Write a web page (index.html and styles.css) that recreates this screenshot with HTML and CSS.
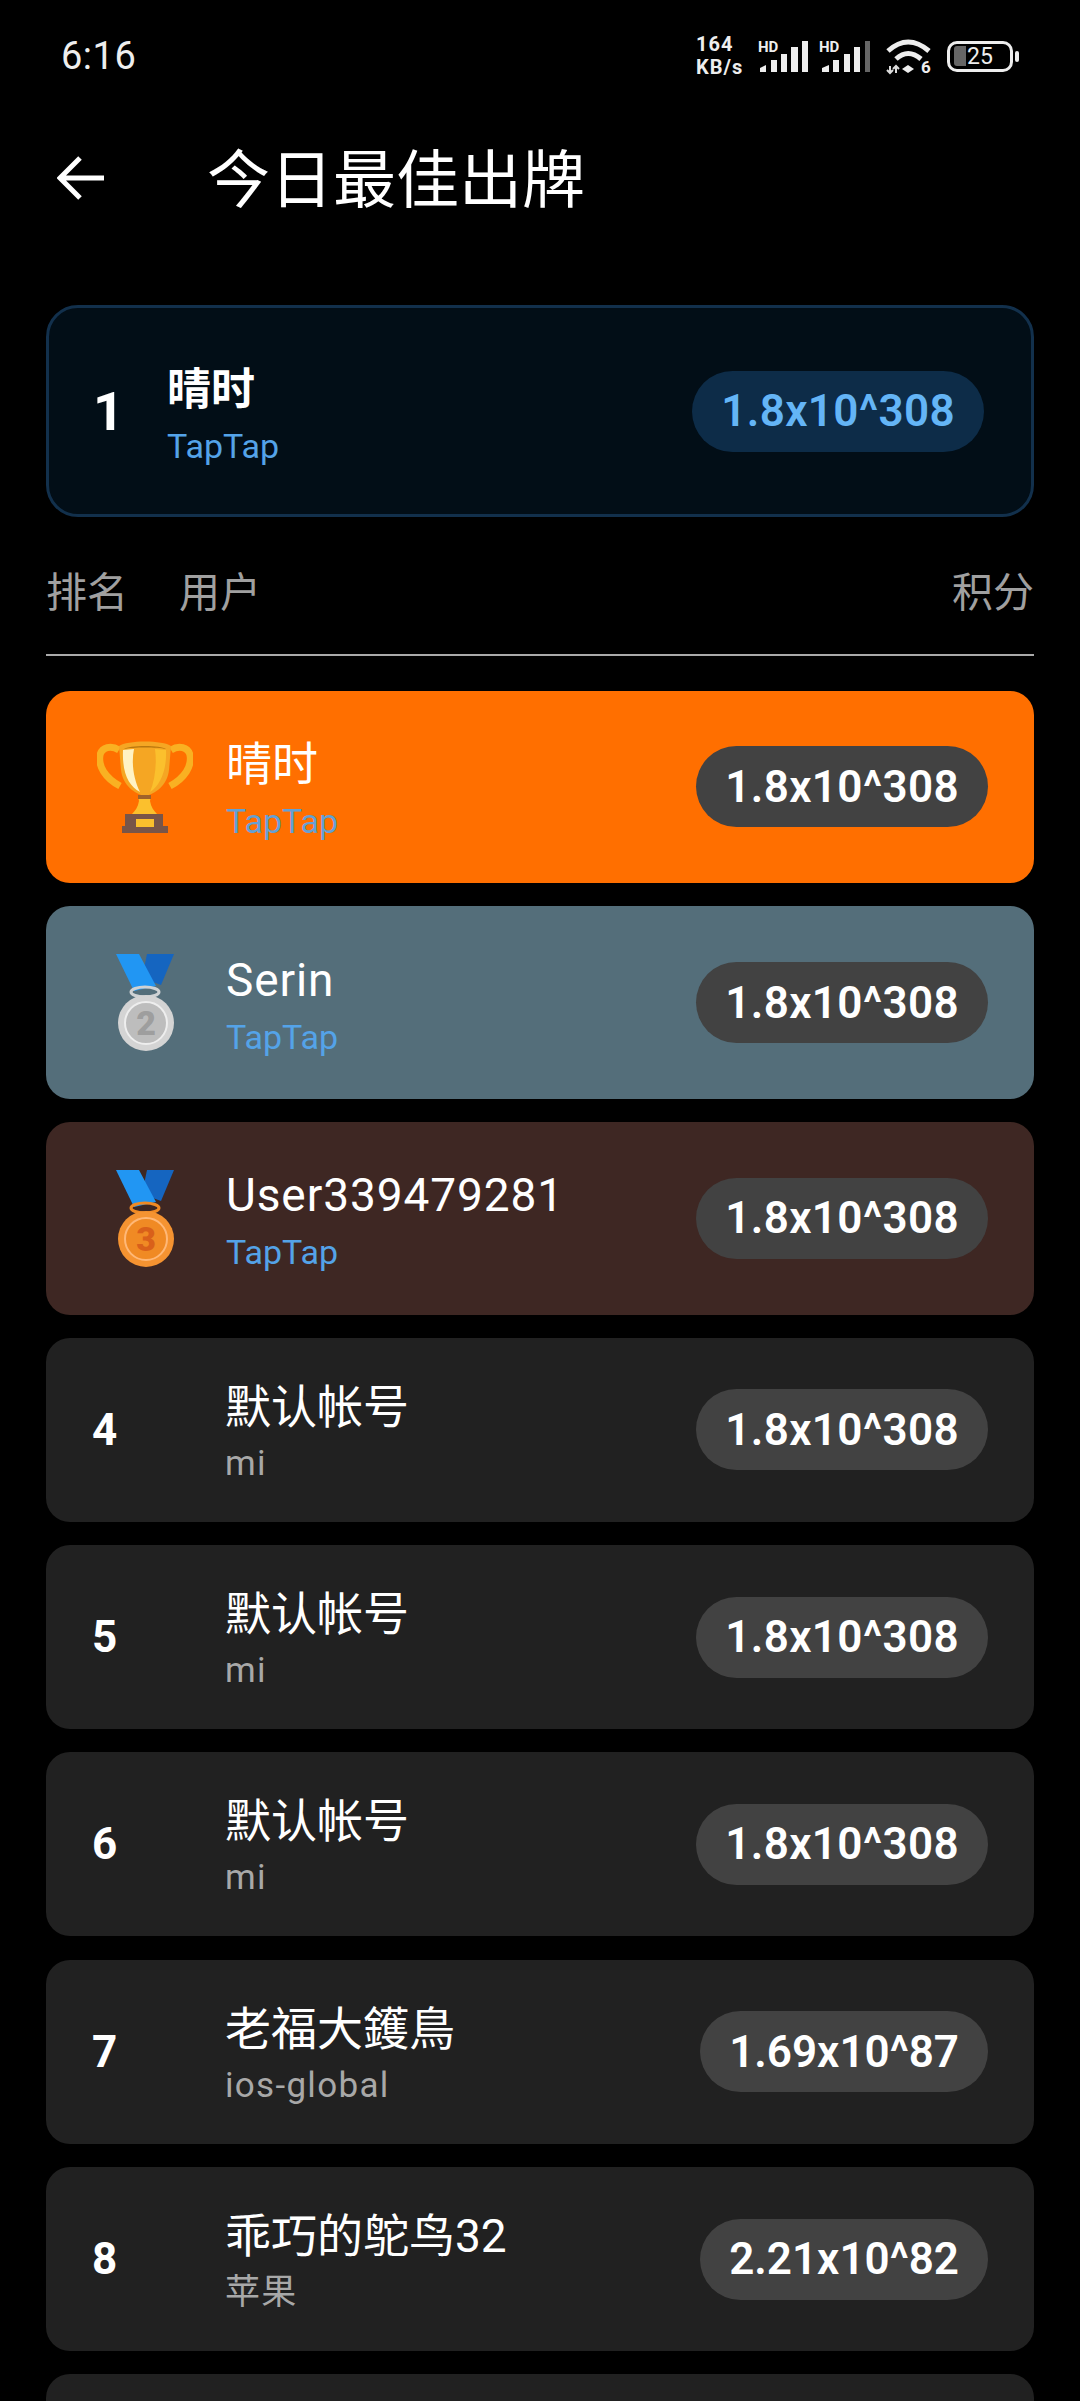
FILE: index.html
```html
<!DOCTYPE html>
<html lang="en">
<head>
    <meta charset="UTF-8">
    <meta name="viewport" content="width=device-width, initial-scale=1.0">
    <title>今日最佳出牌</title>
    <link rel="stylesheet" href="styles.css">
</head>
<body>
    <svg class="defs" width="0" height="0">
        <defs>
            <g id="ribbon">
                <polygon points="31,0 58,0 45,31 26,24" fill="#1565c0"/>
                <polygon points="0,0 23,0 40,32 18,37" fill="#2196f3"/>
            </g>
        </defs>
    </svg>

    <!-- Status bar -->
    <div class="status-bar">
        <span class="clock">6:16</span>
        <div class="status-icons">
            <div class="net-speed"><span>164</span><span>KB/s</span></div>
            <svg class="signal" width="52" height="34" viewBox="0 0 52 34">
                <text x="0" y="13" class="hd">HD</text>
                <path d="M2 29l6-3v7H2zM13 21h6v12h-6zM23 15h6v18h-6zM33 8h7v25h-7zM44 2h6v31h-6z" fill="#eee"/>
            </svg>
            <svg class="signal" width="52" height="34" viewBox="0 0 52 34">
                <text x="0" y="13" class="hd">HD</text>
                <path d="M3 29l7-3v7H3zM14 21h6v12h-6zM25 15h6v18h-6zM35 8h6v25h-6z" fill="#eee"/>
                <path d="M46 2h5v31h-5z" fill="#666"/>
            </svg>
            <svg class="wifi" width="48" height="40" viewBox="0 0 48 40">
                <path d="M3 12Q23 -6 44 12" fill="none" stroke="#eee" stroke-width="5"/>
                <path d="M11 20Q23 9 36 20" fill="none" stroke="#eee" stroke-width="5"/>
                <path d="M23 26l-6 4 6 4 6-4z" fill="#eee"/>
                <path d="M5 27v7M2 31l3 3 3-3M11 34v-7M8 30l3-3 3 3" fill="none" stroke="#ddd" stroke-width="2"/>
                <text x="36" y="34" class="wifi-six">6</text>
            </svg>
            <div class="battery">
                <span class="battery-fill"></span>
                <span class="battery-num">25</span>
            </div>
            <span class="battery-nub"></span>
        </div>
    </div>

    <!-- App bar -->
    <div class="app-bar">
        <svg class="back" width="48" height="44" viewBox="0 0 48 44">
            <path d="M47 22H5M23 2L3 22l20 20" fill="none" stroke="#fff" stroke-width="5"/>
        </svg>
        <h1>今日最佳出牌</h1>
    </div>

    <!-- My rank -->
    <div class="my-card">
        <span class="my-rank">1</span>
        <div class="my-user">
            <div class="my-name">晴时</div>
            <div class="sub blue">TapTap</div>
        </div>
        <span class="pill max my-pill">1.8x10^308</span>
    </div>

    <div class="table-head">
        <span class="head-rank">排名</span>
        <span class="head-user">用户</span>
        <span>积分</span>
    </div>

    <div class="rank-list">
        <div class="row tall gold">
            <div class="rank">
                <svg width="96" height="94" viewBox="0 0 96 94">
                    <path d="M23 46C8 38 1 26 3 15 5 7 14 5 22 10M73 46C88 38 95 26 93 15 91 7 82 5 74 10" fill="none" stroke="#f9b122" stroke-width="7"/>
                    <path d="M22 6C30 0 66 0 74 6L72 30C70 46 58 54 48 56 38 54 26 46 24 30z" fill="#f5a623"/>
                    <path d="M27 9C32 5 64 5 69 9 60 7 36 7 27 9z" fill="#b9770e"/>
                    <path d="M26 10L37 9C34 24 37 40 43 52 32 46 25 34 26 10z" fill="#fff3c4"/>
                    <path d="M58 9L69 10C70 30 63 46 53 52 58 40 60 24 58 9z" fill="#fbc02d"/>
                    <path d="M41 56h13l-1 5c1 6 4 10 7 13H35c3-3 6-7 7-13z" fill="#fbc02d"/>
                    <path d="M41 55h13v4H41z" fill="#a0622a"/>
                    <path d="M28 74h38v12h5v7H25v-7h3z" fill="#795548"/>
                    <path d="M39 79h18v8H39z" fill="#fbc02d"/>
                </svg>
            </div>
            <div class="user">
                <div class="name">晴时</div>
                <div class="sub blue">TapTap</div>
            </div>
            <span class="pill max">1.8x10^308</span>
        </div>

        <div class="row tall silver">
            <div class="rank">
                <svg width="58" height="97" viewBox="0 0 58 97">
                    <use href="#ribbon"/>
                    <ellipse cx="29" cy="38" rx="14" ry="5" fill="none" stroke="#cfd2d4" stroke-width="3"/>
                    <circle cx="30" cy="69" r="28" fill="#d4d4d4"/>
                    <circle cx="30" cy="69" r="21" fill="#bdbdbd" stroke="#eeeeee" stroke-width="2"/>
                    <text x="30" y="81" class="medal-num silver-num">2</text>
                </svg>
            </div>
            <div class="user">
                <div class="name latin">Serin</div>
                <div class="sub blue">TapTap</div>
            </div>
            <span class="pill max">1.8x10^308</span>
        </div>

        <div class="row tall bronze">
            <div class="rank">
                <svg width="58" height="97" viewBox="0 0 58 97">
                    <use href="#ribbon"/>
                    <ellipse cx="29" cy="38" rx="14" ry="5" fill="none" stroke="#f08a24" stroke-width="3"/>
                    <circle cx="30" cy="69" r="28" fill="#f59331"/>
                    <circle cx="30" cy="69" r="21" fill="#f08a24" stroke="#ffb877" stroke-width="2"/>
                    <text x="30" y="81" class="medal-num bronze-num">3</text>
                </svg>
            </div>
            <div class="user">
                <div class="name latin">User339479281</div>
                <div class="sub blue">TapTap</div>
            </div>
            <span class="pill max">1.8x10^308</span>
        </div>

        <div class="row">
            <div class="rank">4</div>
            <div class="user">
                <div class="name">默认帐号</div>
                <div class="sub">mi</div>
            </div>
            <span class="pill max">1.8x10^308</span>
        </div>

        <div class="row">
            <div class="rank">5</div>
            <div class="user">
                <div class="name">默认帐号</div>
                <div class="sub">mi</div>
            </div>
            <span class="pill max">1.8x10^308</span>
        </div>

        <div class="row">
            <div class="rank">6</div>
            <div class="user">
                <div class="name">默认帐号</div>
                <div class="sub">mi</div>
            </div>
            <span class="pill max">1.8x10^308</span>
        </div>

        <div class="row">
            <div class="rank">7</div>
            <div class="user">
                <div class="name">老福大鑊鳥</div>
                <div class="sub">ios-global</div>
            </div>
            <span class="pill">1.69x10^87</span>
        </div>

        <div class="row">
            <div class="rank">8</div>
            <div class="user">
                <div class="name">乖巧的鸵鸟32</div>
                <div class="sub">苹果</div>
            </div>
            <span class="pill">2.21x10^82</span>
        </div>

        <div class="row"></div>
    </div>
</body>
</html>
```

FILE: styles.css
```css
html, body {
    margin: 0;
    padding: 0;
    background: #000;
}

body {
    height: 2401px;
    overflow: hidden;
    color: #fff;
    font-family: 'Roboto', 'Noto Sans CJK SC', sans-serif;
}

.defs {
    position: absolute;
}

.status-bar {
    height: 112px;
    padding: 0 61px 0 61px;
    display: flex;
    justify-content: space-between;
    align-items: center;
}

.clock {
    font-size: 38px;
    font-weight: 400;
    letter-spacing: 0.5px;
    color: #eee;
}

.status-icons {
    display: flex;
    align-items: center;
}

.net-speed {
    min-width: 53px;
    display: flex;
    flex-direction: column;
    margin-right: 9px;
    font-size: 20px;
    font-weight: 700;
    letter-spacing: 1px;
    line-height: 23px;
    color: #eee;
}

.signal {
    margin-right: 9px;
}

.signal + .wifi {
    margin-left: 5px;
}

.hd {
    font-family: 'Roboto', sans-serif;
    font-size: 15px;
    font-weight: 700;
    fill: #eee;
}

.wifi {
    margin: 6px 14px 0 0;
}

.wifi-six {
    font-family: 'Roboto', sans-serif;
    font-size: 17px;
    font-weight: 700;
    fill: #eee;
}

.battery {
    width: 66px;
    height: 31px;
    box-sizing: border-box;
    border: 3px solid #eee;
    border-radius: 10px;
    display: flex;
    align-items: center;
    padding-left: 4px;
}

.battery-fill {
    width: 12px;
    height: 20px;
    background: #666;
    border-radius: 3px 0 0 3px;
}

.battery-num {
    margin-left: 1px;
    font-size: 23px;
    line-height: 25px;
    color: #eee;
}

.battery-nub {
    width: 4px;
    height: 11px;
    margin-left: 2px;
    background: #eee;
    border-radius: 2px;
}

.app-bar {
    height: 132px;
    padding-left: 57px;
    display: flex;
    align-items: center;
}

.app-bar h1 {
    margin: -8px 0 0 102px;
    font-size: 63px;
    font-weight: 400;
}

.my-card {
    height: 212px;
    margin: 61px 46px 0;
    padding: 0 47px 0 44px;
    box-sizing: border-box;
    display: flex;
    align-items: center;
    background: #020e17;
    border: 3px solid #12304c;
    border-radius: 32px;
}

.my-rank {
    width: 74px;
    font-size: 54px;
    font-weight: 700;
}

.my-user {
    flex: 1;
    margin-top: 6px;
}

.my-name {
    font-size: 44px;
    font-weight: 700;
    line-height: 60px;
}

.sub {
    font-size: 35px;
    letter-spacing: 1.3px;
    line-height: 46px;
    margin-top: 3px;
    color: #a8a8a8;
}

.blue {
    font-size: 34px;
    letter-spacing: 0;
    color: #54a3e8;
}

.gold .blue {
    color: #64a0d4;
}

.table-head {
    height: 139px;
    margin: 0 46px;
    padding-top: 51px;
    box-sizing: border-box;
    display: flex;
    border-bottom: 2px solid #aaa;
    font-size: 41px;
    line-height: 50px;
    color: #a0a0a0;
}

.head-rank {
    width: 133px;
}

.head-user {
    flex: 1;
}

.rank-list {
    margin: 34.5px 46px 0;
    display: flex;
    flex-direction: column;
    gap: 23.3px;
}

.row {
    height: 184px;
    flex-shrink: 0;
    padding: 0 46px;
    box-sizing: border-box;
    display: flex;
    align-items: center;
    background: #212121;
    border-radius: 24px;
}

.row.tall {
    height: 192.5px;
}

.gold {
    background: #ff6f00;
}

.silver {
    background: #546e7a;
}

.bronze {
    background: #3e2723;
}

.rank {
    width: 133px;
    font-size: 44px;
    font-weight: 700;
}

.tall .rank {
    display: flex;
    justify-content: center;
    margin-left: -28px;
    width: 162px;
}

.user {
    flex: 1;
    margin-top: 3px;
}

.name {
    font-size: 46px;
    line-height: 62px;
}

.latin {
    letter-spacing: 0.9px;
}

.pill {
    height: 81px;
    padding: 0 29px;
    display: flex;
    align-items: center;
    font-size: 44px;
    font-weight: 600;
    background: #424242;
    border-radius: 41px;
}

.pill.max {
    letter-spacing: 0.4px;
}

.my-pill {
    color: #64b5f6;
    background: #0d2c48;
}

.medal-num {
    font-family: 'Roboto', sans-serif;
    font-size: 34px;
    font-weight: 900;
    text-anchor: middle;
}

.silver-num {
    fill: #9e9e9e;
}

.bronze-num {
    fill: #d9601a;
}
```
